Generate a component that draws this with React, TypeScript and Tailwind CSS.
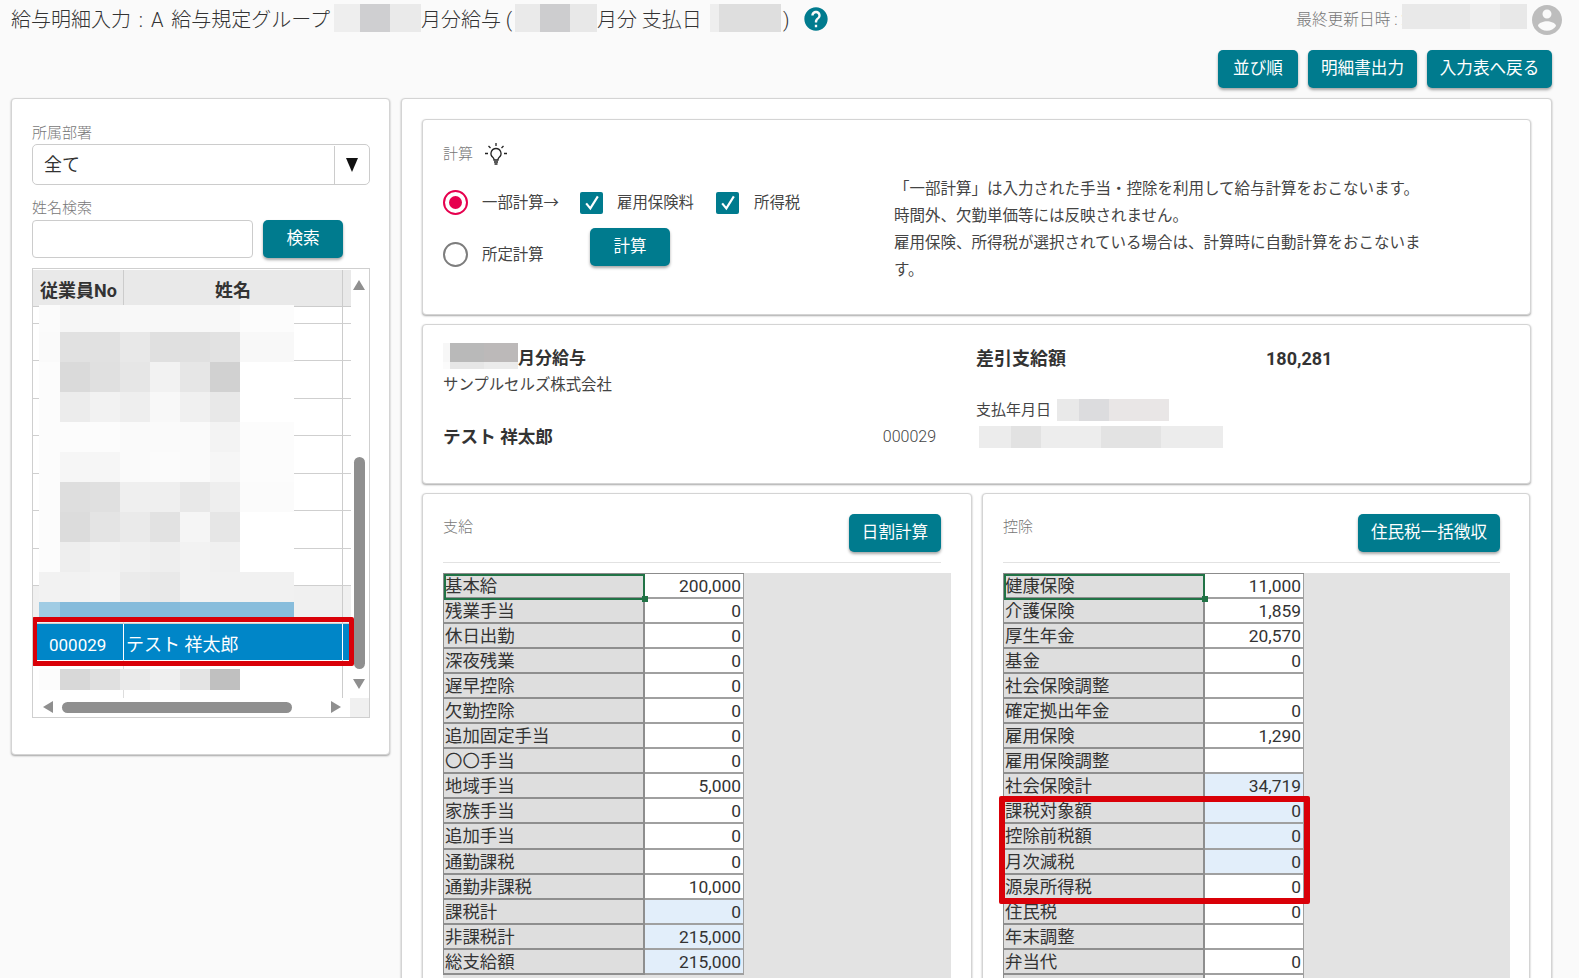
// Payroll slip entry screen: employee list on the left, slip detail on the right.
import { useState } from "react"

type Swatch = [number, string]

const pay: [string, string, boolean?][] = [
  ["基本給", "200,000"],
  ["残業手当", "0"],
  ["休日出勤", "0"],
  ["深夜残業", "0"],
  ["遅早控除", "0"],
  ["欠勤控除", "0"],
  ["追加固定手当", "0"],
  ["〇〇手当", "0"],
  ["地域手当", "5,000"],
  ["家族手当", "0"],
  ["追加手当", "0"],
  ["通勤課税", "0"],
  ["通勤非課税", "10,000"],
  ["課税計", "0", true],
  ["非課税計", "215,000", true],
  ["総支給額", "215,000", true],
]

const deduction: [string, string, boolean?][] = [
  ["健康保険", "11,000"],
  ["介護保険", "1,859"],
  ["厚生年金", "20,570"],
  ["基金", "0"],
  ["社会保険調整", ""],
  ["確定拠出年金", "0"],
  ["雇用保険", "1,290"],
  ["雇用保険調整", ""],
  ["社会保険計", "34,719", true],
  ["課税対象額", "0", true],
  ["控除前税額", "0", true],
  ["月次減税", "0", true],
  ["源泉所得税", "0"],
  ["住民税", "0"],
  ["年末調整", ""],
  ["弁当代", "0"],
  ["", ""],
]

// pixelated rows over the employee list
const mosaicWidths = [21, 30, 30, 30, 30, 30, 30, 54]
const mosaicRows: [number, string[]][] = [
  [27, ["#fbfbfb", "#f6f6f6", "#f7f7f7", "#f8f8f8", "#f8f8f8", "#f8f8f8", "#f8f8f8", "#fcfcfc"]],
  [30, ["#fafafa", "#e1e1e1", "#e1e1e1", "#e8e8e8", "#e0e0e0", "#e0e0e0", "#e2e2e2", "#f8f8f8"]],
  [30, ["#fcfcfc", "#dadada", "#e0e0e0", "#e6e6e6", "#f2f2f2", "#e6e6e6", "#d1d1d1", "#ffffff"]],
  [30, ["#fcfcfc", "#ececec", "#f2f2f2", "#eeeeee", "#f8f8f8", "#f0f0f0", "#e8e8e8", "#ffffff"]],
  [30, ["#fcfcfc", "#fcfcfc", "#fcfcfc", "#fafafa", "#fafafa", "#fafafa", "#f3f3f3", "#fcfcfc"]],
  [30, ["#fcfcfc", "#f6f6f6", "#f6f6f6", "#fafafa", "#fbfbfb", "#fafafa", "#f6f6f6", "#fcfcfc"]],
  [30, ["#fcfcfc", "#dedede", "#e0e0e0", "#efefef", "#efefef", "#e8e8e8", "#eeeeee", "#fbfbfb"]],
  [30, ["#fcfcfc", "#dcdcdc", "#e4e4e4", "#eaeaea", "#e2e2e2", "#f5f5f5", "#e6e6e6", "#ffffff"]],
  [30, ["#fcfcfc", "#eeeeee", "#f2f2f2", "#f0f0f0", "#eeeeee", "#f2f2f2", "#f0f0f0", "#ffffff"]],
  [30, ["#f2f2f2", "#f2f2f2", "#f3f3f3", "#ebebeb", "#e9e9e9", "#f2f2f2", "#f1f1f1", "#f1f1f1"]],
  [15, ["#a0cce4", "#85bbdb", "#85bbdb", "#85bbdb", "#85bbdb", "#88bddc", "#88bddc", "#88bddc"]],
]
const mosaicLast = ["#fcfcfc", "#d8d8d8", "#e0e0e0", "#eaeaea", "#efefef", "#e4e4e4", "#c0c0c0", "#ffffff"]

function Blur({ parts, className = "" }: { parts: Swatch[]; className?: string }) {
  return (
    <span className={`inline-flex shrink-0 ${className}`}>
      {parts.map(([w, c], i) => (
        <span key={i} className="block h-full" style={{ width: w, background: c }} />
      ))}
    </span>
  )
}

function TealButton({ children, className = "" }: { children: React.ReactNode; className?: string }) {
  return (
    <button className={`h-[38px] shrink-0 rounded-[5px] bg-[#007b8e] text-[16.6px] text-white shadow-[0_2px_3px_rgba(0,0,0,0.35)] ${className}`}>
      {children}
    </button>
  )
}

function Card({ children, className = "" }: { children: React.ReactNode; className?: string }) {
  return (
    <div className={`rounded-[4px] border border-[#d4d4d4] bg-white shadow-[0_1px_2px_rgba(0,0,0,0.35)] ${className}`}>
      {children}
    </div>
  )
}

function Check() {
  return (
    <span className="flex h-[22px] w-[23px] items-center justify-center rounded-[2px] bg-[#007b8e]">
      <svg viewBox="0 0 24 24" className="h-[20px] w-[20px]" fill="none" stroke="white" strokeWidth="2.6">
        <path d="M5 12.5l5 6L19 4" />
      </svg>
    </span>
  )
}

function Radio({ on }: { on?: boolean }) {
  return (
    <span className={`flex h-[25px] w-[25px] shrink-0 items-center justify-center rounded-full border-[2.5px] ${on ? "border-[#e6004e]" : "border-[#7d7d7d]"}`}>
      {on && <span className="h-[13px] w-[13px] rounded-full bg-[#e6004e]" />}
    </span>
  )
}

function Bulb() {
  return (
    <svg viewBox="0 0 24 24" className="h-[24px] w-[24px]" fill="none" stroke="#222" strokeWidth="1.3">
      <path d="M12 1v3M4.5 4l2 2M19.5 4l-2 2M1 11.5h3M20 11.5h3" />
      <path d="M12 6.5a5 5 0 0 0-3 9c.8.7 1 1.6 1 2.5h4c0-.9.2-1.8 1-2.5a5 5 0 0 0-3-9z" />
      <path d="M10 20h4M10.5 22h3" strokeWidth="1.6" />
    </svg>
  )
}

function SlipTable({ rows, children }: { rows: [string, string, boolean?][]; children?: React.ReactNode }) {
  return (
    <div className="relative w-[301px] border-t border-l border-[#8c8c8c]">
      {rows.map(([label, value, calc], i) => (
        <div key={i} className="flex h-[25.06px] text-[17.4px] leading-[24px] text-[#333]">
          <div className="w-[201px] border-r-2 border-b-2 border-[#8e8e8e] bg-[#dedede] pl-[1px] whitespace-nowrap">{label}</div>
          <div className={`w-[99px] border-r border-b-2 border-[#a0a0a0] pr-[2px] text-right ${calc ? "bg-[#e2eefa]" : "bg-white"}`}>
            {value}
          </div>
        </div>
      ))}
      {/* excel cell cursor */}
      <div className="absolute top-0 left-0 h-[26px] w-[201px] border-2 border-[#217346]" />
      <div className="absolute top-[22px] left-[198px] h-[6px] w-[6px] bg-[#217346]" />
      {children}
    </div>
  )
}

function EmployeeList() {
  const [selected] = useState("000029")
  const lines = [17, 37, 38, 37, 38, 37, 38, 37, 38]
  return (
    <div className="relative mt-[10px] h-[450px] w-[338px] overflow-hidden border border-[#cfcfcf] bg-white">
      <div className="mt-[1px] flex h-[37px] w-[318px] border-b border-[#ccc] bg-[#e9e9e9] text-[18px] font-bold text-[#333]">
        <div className="flex w-[91px] items-center justify-center border-r border-[#ccc] pt-[4px] pl-[1px] whitespace-nowrap">従業員No</div>
        <div className="flex w-[219px] items-center justify-center border-r border-[#ccc] pt-[4px]">姓名</div>
      </div>
      {lines.map((h, i) => (
        <div key={i} className={`flex w-[318px] border-b border-[#cfcfcf] ${i === 8 ? "bg-[#f0f0f0]" : ""}`} style={{ height: h }}>
          <div className="w-[91px] border-r border-[#ddd]" />
          <div className="w-[219px] border-r border-[#ccc]" />
        </div>
      ))}
      <div className="flex h-[36px] w-[318px] bg-[#0086c8] text-white">
        <div className="w-[91px] border-r border-white pt-[9px] pl-[16px] text-[17px]">{selected}</div>
        <div className="w-[219px] border-r border-white pt-[7px] pl-[2px] text-[18px]">テスト 祥太郎</div>
      </div>
      <div className="flex h-[38px] w-[318px]">
        <div className="w-[91px] border-r border-[#ddd]" />
        <div className="w-[219px] border-r border-[#ccc]" />
      </div>

      {/* pixelated names */}
      <div className="absolute top-[36px] left-[6px]">
        {mosaicRows.map(([h, colors], r) => (
          <div key={r} className="flex" style={{ height: h }}>
            {colors.map((c, i) => (
              <div key={i} style={{ width: mosaicWidths[i], background: c }} />
            ))}
          </div>
        ))}
      </div>
      <div className="absolute top-[400px] left-[6px] flex h-[21px]">
        {mosaicLast.map((c, i) => (
          <div key={i} style={{ width: mosaicWidths[i], background: c }} />
        ))}
      </div>

      {/* scrollbars */}
      <div className="absolute top-[11px] right-[4px] h-0 w-0 border-x-[6px] border-b-[10px] border-x-transparent border-b-[#8f8f8f]" />
      <div className="absolute top-[188px] right-[4px] h-[212px] w-[11px] rounded-full bg-[#8f8f8f]" />
      <div className="absolute top-[410px] right-[4px] h-0 w-0 border-x-[6px] border-t-[10px] border-x-transparent border-t-[#8f8f8f]" />
      <div className="absolute bottom-0 left-0 h-[19px] w-full bg-white" />
      <div className="absolute right-0 bottom-0 h-[19px] w-[19px] bg-[#f0f0f0]" />
      <div className="absolute bottom-[4px] left-[10px] h-0 w-0 border-y-[6px] border-r-[10px] border-y-transparent border-r-[#8f8f8f]" />
      <div className="absolute bottom-[4px] left-[29px] h-[11px] w-[230px] rounded-full bg-[#8f8f8f]" />
      <div className="absolute right-[28px] bottom-[4px] h-0 w-0 border-y-[6px] border-l-[10px] border-y-transparent border-l-[#8f8f8f]" />

      {/* red marker */}
      <div className="absolute top-[348px] left-[-1px] h-[49px] w-[322px] rounded-[2px] border-[5px] border-[#d90008]" />
    </div>
  )
}

export default function App() {
  return (
    <div className="h-[978px] w-[1579px] overflow-hidden bg-[#fafafa] font-['Roboto','Noto_Sans_CJK_JP',sans-serif] text-[#333]">
      <header className="flex h-[40px] items-start justify-between pt-[4px] pr-[14px] pl-[11px]">
        <div className="flex h-[28px] items-center text-[20px] font-light whitespace-nowrap text-[#333]">
          <span className="w-[323px] pt-[4px] [word-spacing:3px]">給与明細入力 : A 給与規定グループ</span>
          <Blur className="h-[28px]" parts={[[26, "#eeeeee"], [30, "#cfcfd1"], [31, "#eaeaea"]]} />
          <span className="w-[94px] pt-[4px]">月分給与 (</span>
          <Blur className="h-[28px]" parts={[[25, "#eaeaea"], [30, "#cdcdcf"], [27, "#e8e8e8"]]} />
          <span className="w-[113px] pt-[4px]">月分 支払日</span>
          <Blur className="h-[28px]" parts={[[9, "#eeeeee"], [62, "#dedede"]]} />
          <span className="ml-[2px] pt-[4px]">)</span>
          <svg viewBox="0 0 24 24" className="mt-[1px] ml-[12px] h-[28px] w-[28px]" fill="#007b8e">
            <path d="M12 2C6.48 2 2 6.48 2 12s4.48 10 10 10 10-4.48 10-10S17.52 2 12 2zm1 17h-2v-2h2v2zm2.07-7.75l-.9.92C13.45 12.9 13 13.5 13 15h-2v-.5c0-1.1.45-2.1 1.17-2.83l1.24-1.26c.37-.36.59-.86.59-1.41 0-1.1-.9-2-2-2s-2 .9-2 2H8c0-2.21 1.79-4 4-4s4 1.79 4 4c0 .88-.36 1.68-.93 2.25z" />
          </svg>
        </div>
        <div className="flex h-[32px] items-start text-[15.7px] font-light text-[#777]">
          <span className="mt-[4px]">最終更新日時 : 2</span>
          <Blur className="-ml-[8px] h-[25px]" parts={[[68, "#e9e9e9"], [30, "#efefef"], [27, "#e8e8e8"]]} />
          <svg viewBox="0 0 24 24" className="-mt-[2px] ml-[2px] h-[36px] w-[36px]" fill="#bdbdbd">
            <path d="M12 2C6.48 2 2 6.48 2 12s4.48 10 10 10 10-4.48 10-10S17.52 2 12 2zm0 3c1.66 0 3 1.34 3 3s-1.34 3-3 3-3-1.34-3-3 1.34-3 3-3zm0 14.2c-2.5 0-4.71-1.28-6-3.22.03-1.99 4-3.08 6-3.08 1.99 0 5.97 1.09 6 3.08-1.29 1.94-3.5 3.22-6 3.22z" />
          </svg>
        </div>
      </header>

      <div className="mt-[10px] flex justify-end gap-[10px] pr-[27px]">
        <TealButton className="w-[80px]">並び順</TealButton>
        <TealButton className="w-[109px]">明細書出力</TealButton>
        <TealButton className="w-[125px]">入力表へ戻る</TealButton>
      </div>

      <main className="mt-[10px] flex items-start gap-[11px] pl-[11px]">
        {/* employee search */}
        <Card className="h-[657px] w-[379px] shrink-0 px-[20px] pt-[24px]">
          <div className="text-[15px] leading-[20px] font-light text-[#777]">所属部署</div>
          <div className="mt-[1px] flex h-[41px] w-[338px] items-center rounded-[5px] border border-[#ccc] bg-white">
            <span className="flex-1 pl-[11px] text-[18px]">全て</span>
            <span className="flex h-[38px] w-[35px] items-center justify-center border-l border-[#ccc]">
              <span className="h-0 w-0 border-x-[6px] border-t-[14px] border-x-transparent border-t-[#111]" />
            </span>
          </div>
          <div className="mt-[13px] text-[15px] leading-[20px] font-light text-[#777]">姓名検索</div>
          <div className="mt-[2px] flex gap-[10px]">
            <input className="h-[38px] w-[221px] rounded-[4px] border border-[#ccc] bg-white" />
            <TealButton className="w-[80px]">検索</TealButton>
          </div>
          <EmployeeList />
        </Card>

        {/* slip detail */}
        <Card className="h-[900px] w-[1151px] shrink-0 px-[20px] pt-[20px]">
          <Card className="h-[196px] w-[1109px]">
            <div className="flex">
              <div className="w-[471px] shrink-0 pl-[20px]">
                <div className="mt-[21px] flex h-[24px] items-center gap-[11px] pt-[2px] text-[15px] font-light text-[#777]">
                  <span>計算</span>
                  <Bulb />
                </div>
                <div className="mt-[25px] flex h-[25px] items-center text-[15.4px] text-[#444]">
                  <Radio on />
                  <span className="ml-[14px] w-[98px] pt-[3px] whitespace-nowrap">一部計算→</span>
                  <Check />
                  <span className="ml-[14px] w-[99px] pt-[3px] whitespace-nowrap">雇用保険料</span>
                  <Check />
                  <span className="ml-[15px] pt-[3px] whitespace-nowrap">所得税</span>
                </div>
                <div className="mt-[13px] flex items-start text-[15.4px] text-[#444]">
                  <span className="mt-[14px]">
                    <Radio />
                  </span>
                  <span className="mt-[16px] ml-[14px] w-[108px] whitespace-nowrap">所定計算</span>
                  <TealButton className="w-[80px]">計算</TealButton>
                </div>
              </div>
              <p className="mt-[56px] w-[533px] text-[15.5px] leading-[27px] text-[#444]">
                「一部計算」は入力された手当・控除を利用して給与計算をおこないます。
                <br />
                時間外、欠勤単価等には反映されません。
                <br />
                雇用保険、所得税が選択されている場合は、計算時に自動計算をおこないます。
              </p>
            </div>
          </Card>

          <Card className="mt-[9px] flex h-[160px] w-[1109px] pl-[20px]">
            <div className="w-[533px] shrink-0">
              <div className="mt-[18px] flex h-[26px] items-center text-[17px] font-bold">
                <span className="flex h-[26px] flex-col">
                  <Blur className="h-[19px]" parts={[[7, "#f7f7f7"], [34, "#b9b9b9"], [34, "#bcb9b9"]]} />
                  <Blur className="h-[7px]" parts={[[7, "#fbfbfb"], [34, "#e6e6e6"], [34, "#ebebeb"]]} />
                </span>
                <span className="pt-[6px]">月分給与</span>
              </div>
              <div className="mt-[6px] text-[15.4px] leading-[20px] text-[#444]">サンプルセルズ株式会社</div>
              <div className="mt-[29px] flex items-center justify-between">
                <span className="text-[17.6px] font-bold">テスト 祥太郎</span>
                <span className="pr-[40px] text-[16px] font-light text-[#444]">000029</span>
              </div>
            </div>
            <div>
              <div className="mt-[21px] flex h-[24px] items-center text-[18px] font-bold">
                <span className="w-[290px]">差引支給額</span>
                <span>180,281</span>
              </div>
              <div className="mt-[29px] flex h-[22px] items-center text-[15px] text-[#444]">
                <span className="w-[81px]">支払年月日</span>
                <Blur className="h-[22px]" parts={[[22, "#e9e9e9"], [30, "#dcdcde"], [60, "#e9e6e6"]]} />
              </div>
              <Blur className="mt-[5px] ml-[3px] h-[22px]" parts={[[32, "#ececec"], [30, "#e2e2e2"], [60, "#ededed"], [60, "#e3e3e3"], [62, "#ececec"]]} />
            </div>
          </Card>

          <div className="mt-[9px] flex gap-[10px]">
            <Card className="h-[600px] w-[550px] shrink-0 px-[20px]">
              <div className="flex h-[69px] w-[498px] items-start justify-between border-b border-[#e2e2e2] pt-[20px]">
                <span className="mt-[3px] text-[15px] leading-[20px] font-light text-[#777]">支給</span>
                <TealButton className="w-[92px]">日割計算</TealButton>
              </div>
              <div className="mt-[10px] h-[520px] w-[508px] bg-[#e3e3e3]">
                <SlipTable rows={pay} />
              </div>
            </Card>
            <Card className="h-[600px] w-[548px] shrink-0 px-[20px]">
              <div className="flex h-[69px] w-[497px] items-start justify-between border-b border-[#e2e2e2] pt-[20px]">
                <span className="mt-[3px] text-[15px] leading-[20px] font-light text-[#777]">控除</span>
                <TealButton className="w-[142px]">住民税一括徴収</TealButton>
              </div>
              <div className="mt-[10px] h-[520px] w-[507px] bg-[#e3e3e3]">
                <SlipTable rows={deduction}>
                  <div className="absolute top-[222px] left-[-5px] h-[108px] w-[311px] rounded-[2px] border-[6px] border-[#d90008]" />
                </SlipTable>
              </div>
            </Card>
          </div>
        </Card>
      </main>
    </div>
  )
}
